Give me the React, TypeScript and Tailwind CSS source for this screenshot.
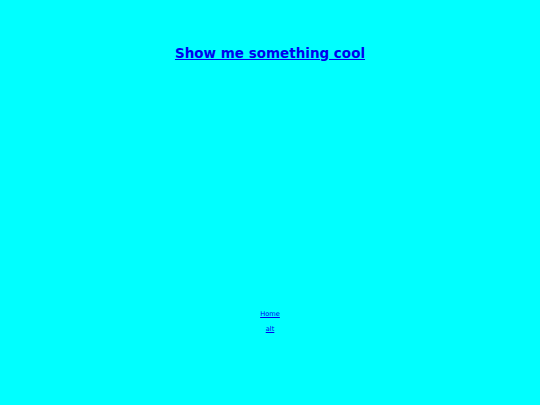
import React from 'react';

export default function App() {
  return (
    <div className="flex h-[405px] w-full flex-col items-center bg-[#00ffff] font-['DejaVu_Sans',sans-serif]">
      <h1 className="mt-[44px] text-[13.5px] font-bold leading-[18px]">
        <a href="#" className="text-[#0000ee] underline">
          Show me something cool
        </a>
      </h1>
      <div className="mt-[248px] flex flex-col items-center gap-[7px] text-[6.7px] leading-[8px]">
        <a href="#" className="text-[#0000ee] underline">
          Home
        </a>
        <a href="#" className="text-[#0000ee] underline">
          alt
        </a>
      </div>
    </div>
  );
}
